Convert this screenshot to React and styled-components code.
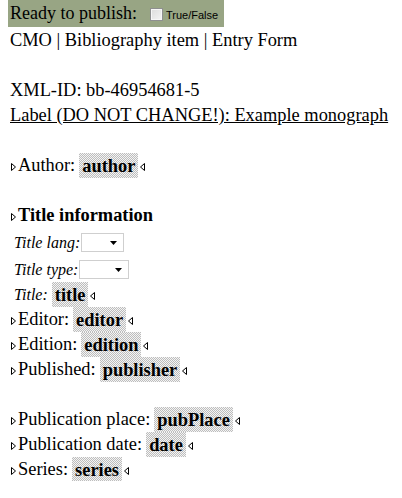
import React from "react";
import styled, { createGlobalStyle } from "styled-components";

const Global = createGlobalStyle`
  html, body { background: #fff; }
  body {
    margin: 0 8px;
    font-family: "Liberation Serif", "Times New Roman", serif;
    font-size: 18.4px;
    color: #000;
  }
`;

const Header = styled.div`
  display: inline-flex;
  align-items: center;
  height: 27px;
  padding: 0 6px 0 2px;
  background: #98a584;
`;

const HeaderText = styled.span`
  font-size: 18px;
`;

const CheckBox = styled.span`
  display: inline-block;
  box-sizing: border-box;
  width: 13px;
  height: 13px;
  margin: 1px 3px 0 13px;
  border: 1px solid #8e8f8f;
  background: linear-gradient(135deg, #dcdcdc 0%, #f4f4f4 100%);
  box-shadow: inset 0 0 0 1px #f6f6f6;
`;

const SmallLabel = styled.span`
  font-family: "Liberation Sans", Arial, sans-serif;
  font-size: 11px;
  margin-top: 2px;
`;

const Row = styled.div`
  display: flex;
  align-items: center;
  height: ${(p) => p.$h || 25}px;
  padding-top: ${(p) => p.$pt ?? 2}px;
  box-sizing: border-box;
  padding-left: ${(p) => p.$indent || 0}px;
  line-height: 25px;
  white-space: pre;
`;

const Underlined = styled.span`
  text-decoration: underline;
`;

const Heading = styled.span`
  font-weight: bold;
`;

const Italic = styled.span`
  font-style: italic;
  font-size: 16px;
`;

const Value = styled.span`
  display: inline-block;
  font-weight: bold;
  line-height: 21px;
  padding: 3px 3px 1px;
  margin-left: ${(p) => p.$ml ?? 4}px;
  background-color: #eee;
  background-image: repeating-conic-gradient(#bdbdbd 0% 25%, #f4f4f4 0% 50%);
  background-size: 2px 2px;
`;

const Tri = styled.svg`
  flex: none;
  margin-top: 2px;
  margin-left: ${(p) => p.$ml || 0}px;
  margin-right: ${(p) => p.$mr || 0}px;
`;

const SelectBox = styled.div`
  display: flex;
  align-items: center;
  justify-content: flex-end;
  box-sizing: border-box;
  width: ${(p) => p.$w}px;
  height: 19px;
  margin-left: ${(p) => p.$ml || 1}px;
  padding-right: 6px;
  border: 1px solid #cfcfcf;
  background: #fff;
`;

const Open = () => (
  <Tri width="5" height="8" viewBox="0 0 5 8" $ml={3} $mr={2}>
    <path d="M0.5 0.5 L4.5 4 L0.5 7.5 Z" fill="#fff" stroke="#000" strokeWidth="1" />
  </Tri>
);

const Close = () => (
  <Tri width="5" height="8" viewBox="0 0 5 8" $ml={2}>
    <path d="M4.5 0.5 L0.5 4 L4.5 7.5 Z" fill="#fff" stroke="#000" strokeWidth="1" />
  </Tri>
);

const Arrow = () => (
  <svg width="7" height="4" viewBox="0 0 7 4">
    <path d="M0 0 H7 L3.5 4 Z" fill="#000" />
  </svg>
);

const Field = ({ label, value }) => (
  <Row>
    <Open />
    <span>{label}</span>
    <Value>{value}</Value>
    <Close />
  </Row>
);

export default function App() {
  return (
    <>
      <Global />
      <Header>
        <HeaderText>Ready to publish:</HeaderText>
        <CheckBox />
        <SmallLabel>True/False</SmallLabel>
      </Header>
      <Row $indent={2}>CMO | Bibliography item | Entry Form</Row>
      <Row />
      <Row $indent={2}>XML-ID: bb-46954681-5</Row>
      <Row $indent={2}>
        <Underlined>Label (DO NOT CHANGE!): Example monograph</Underlined>
      </Row>
      <Row />
      <Field label="Author:" value="author" />
      <Row />
      <Row>
        <Open />
        <Heading>Title information</Heading>
      </Row>
      <Row $h={27} $pt={4} $indent={6}>
        <Italic>Title lang:</Italic>
        <SelectBox $w={43}>
          <Arrow />
        </SelectBox>
      </Row>
      <Row $h={27} $pt={4} $indent={6}>
        <Italic>Title type:</Italic>
        <SelectBox $w={50}>
          <Arrow />
        </SelectBox>
      </Row>
      <Row $indent={6}>
        <Italic>Title:</Italic>
        <Value>title</Value>
        <Close />
      </Row>
      <Field label="Editor:" value="editor" />
      <Field label="Edition:" value="edition" />
      <Field label="Published:" value="publisher" />
      <Row />
      <Field label="Publication place:" value="pubPlace" />
      <Field label="Publication date:" value="date" />
      <Field label="Series:" value="series" />
    </>
  );
}
